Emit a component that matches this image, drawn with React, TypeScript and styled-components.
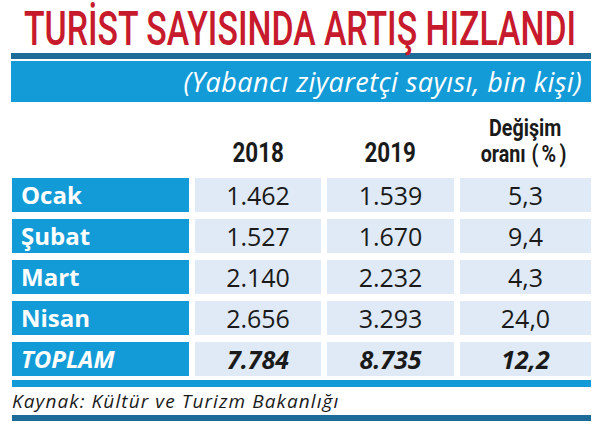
import React, { useLayoutEffect, useRef, useState } from "react";
import styled, { createGlobalStyle } from "styled-components";

const GlobalStyle = createGlobalStyle`
  html, body { margin: 0; padding: 0; background: #ffffff; overflow: hidden; }
  body { font-family: "Open Sans", "Liberation Sans", sans-serif; }
`;

const Page = styled.div`
  width: 596px;
  height: 427px;
  display: flex;
  flex-direction: column;
  padding: 0 5px 0 11px;
  box-sizing: border-box;
`;

const TitleRow = styled.div`
  height: 53px;
  display: flex;
  align-items: flex-start;
  padding-left: 13px;
`;

const TitleText = styled.h1`
  margin: 12px 0 0 0;
  display: inline-block;
  white-space: nowrap;
  font-family: Roboto, "Liberation Sans", sans-serif;
  font-weight: 500;
  font-size: 33px;
  line-height: 33px;
  color: #c71a2c;
  transform-origin: left center;
`;

const DarkRule = styled.div`
  height: 6px;
  background: #1d6b98;
`;

const Band = styled.div`
  margin-top: 2px;
  height: 41px;
  background: #139bd8;
  display: flex;
  align-items: center;
  justify-content: flex-end;
  padding-right: 9px;
`;

const Subtitle = styled.span`
  font-family: "Open Sans", sans-serif;
  font-style: italic;
  font-size: 27px;
  letter-spacing: 0.4px;
  color: #ffffff;
  white-space: nowrap;
`;

const Table = styled.div`
  display: grid;
  grid-template-columns: 177px 126px 127px 131px;
  grid-template-rows: 68px repeat(5, 34px);
  column-gap: 6px;
  row-gap: 7px;
  padding-left: 1px;
  margin-top: 1px;
`;

const HeadCell = styled.div`
  display: flex;
  align-items: flex-end;
  justify-content: center;
  text-align: center;
  padding-bottom: 4px;
  color: #1a1a1a;
`;

const Condensed = styled.span<{ $size: number; $lh: number; $sx: number }>`
  display: inline-block;
  font-family: Roboto, "Liberation Sans", sans-serif;
  font-weight: 700;
  font-size: ${(p) => p.$size}px;
  line-height: ${(p) => p.$lh}px;
  transform: scaleX(${(p) => p.$sx});
  transform-origin: center bottom;
  white-space: nowrap;
`;

const Parens = styled.span`
  letter-spacing: 4px;
  margin-left: 7px;
`;

const Label = styled.div<{ $total?: boolean }>`
  background: #139bd8;
  color: #ffffff;
  font-family: "Open Sans", sans-serif;
  font-weight: 700;
  font-style: ${(p) => (p.$total ? "italic" : "normal")};
  font-size: 24px;
  display: flex;
  align-items: center;
  padding-left: 9px;
  line-height: 1;
`;

const Value = styled.div<{ $total?: boolean }>`
  background: #dfeaf6;
  color: #1a1a1a;
  font-family: "Open Sans", sans-serif;
  font-weight: ${(p) => (p.$total ? 700 : 400)};
  font-style: ${(p) => (p.$total ? "italic" : "normal")};
  font-size: 25px;
  display: flex;
  align-items: center;
  justify-content: center;
  line-height: 1;
`;

const LightRule = styled.div`
  height: 7px;
  background: #139bd8;
  margin: 4px 0 0 1px;
`;

const Source = styled.div`
  font-family: "Open Sans", sans-serif;
  font-style: italic;
  font-size: 19px;
  letter-spacing: 1.1px;
  line-height: 28px;
  color: #1a1a1a;
  padding-left: 1px;
  white-space: nowrap;
`;

const FooterRule = styled(DarkRule)`
  margin-left: 1px;
`;

const rows = [
  { m: "Ocak", a: "1.462", b: "1.539", c: "5,3" },
  { m: "Şubat", a: "1.527", b: "1.670", c: "9,4" },
  { m: "Mart", a: "2.140", b: "2.232", c: "4,3" },
  { m: "Nisan", a: "2.656", b: "3.293", c: "24,0" },
];

function Title({ text, width }: { text: string; width: number }) {
  const ref = useRef<HTMLHeadingElement>(null);
  const [sx, setSx] = useState(1);
  useLayoutEffect(() => {
    const measure = () => {
      if (ref.current && ref.current.offsetWidth > 0) {
        setSx(width / ref.current.offsetWidth);
      }
    };
    measure();
    if (document.fonts && document.fonts.ready) {
      document.fonts.ready.then(measure);
    }
  }, [width]);
  return (
    <TitleText ref={ref} style={{ transform: `scale(${sx}, 1.45)` }}>
      {text}
    </TitleText>
  );
}

export default function App() {
  return (
    <>
      <GlobalStyle />
      <Page>
        <TitleRow>
          <Title text="TURİST SAYISINDA ARTIŞ HIZLANDI" width={552} />
        </TitleRow>
        <DarkRule />
        <Band>
          <Subtitle>(Yabancı ziyaretçi sayısı, bin kişi)</Subtitle>
        </Band>
        <Table>
          <HeadCell />
          <HeadCell>
            <Condensed $size={28} $lh={28} $sx={0.8}>2018</Condensed>
          </HeadCell>
          <HeadCell>
            <Condensed $size={28} $lh={28} $sx={0.8}>2019</Condensed>
          </HeadCell>
          <HeadCell>
            <Condensed $size={24} $lh={26} $sx={0.82}>
              Değişim
              <br />
              oranı<Parens>(%)</Parens>
            </Condensed>
          </HeadCell>
          {rows.map((r) => (
            <React.Fragment key={r.m}>
              <Label>{r.m}</Label>
              <Value>{r.a}</Value>
              <Value>{r.b}</Value>
              <Value>{r.c}</Value>
            </React.Fragment>
          ))}
          <Label $total>TOPLAM</Label>
          <Value $total>7.784</Value>
          <Value $total>8.735</Value>
          <Value $total>12,2</Value>
        </Table>
        <LightRule />
        <Source>Kaynak: Kültür ve Turizm Bakanlığı</Source>
        <FooterRule />
      </Page>
    </>
  );
}
